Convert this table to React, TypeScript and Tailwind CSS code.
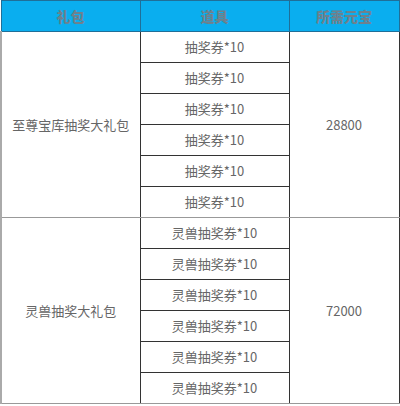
const groups = [
  { name: "至尊宝库抽奖大礼包", item: "抽奖券*10", price: "28800" },
  { name: "灵兽抽奖大礼包", item: "灵兽抽奖券*10", price: "72000" },
];

export default function App() {
  return (
    <div
      className="w-[400px] h-[406px] bg-white overflow-hidden"
      style={{ fontFamily: '"Noto Sans CJK SC", "Noto Sans", sans-serif' }}
    >
      <table className="w-[398px] border-collapse table-fixed text-[13px] text-[#666]">
        <colgroup>
          <col className="w-[139px]" />
          <col className="w-[149px]" />
          <col className="w-[110px]" />
        </colgroup>
        <thead>
          <tr className="h-[31px] bg-[#0aaeef] text-[#6e818d] text-[14px]">
            <th className="border border-[#1f6f99] font-black">礼包</th>
            <th className="border border-[#1f6f99] font-black">道具</th>
            <th className="border border-[#1f6f99] font-black">所需元宝</th>
          </tr>
        </thead>
        <tbody>
          {groups.map((g) =>
            Array.from({ length: 6 }).map((_, i) => (
              <tr key={g.name + i} className="h-[31px]">
                {i === 0 && (
                  <td
                    rowSpan={6}
                    className="text-center border-l-2 border-l-[#aaa] border-r border-r-[#333] border-b border-b-[#999]"
                  >
                    {g.name}
                  </td>
                )}
                <td
                  className={
                    "text-center border-r border-r-[#333] " +
                    (i === 5 ? "border-b border-b-[#999]" : "border-b border-b-[#333]")
                  }
                >
                  {g.item}
                </td>
                {i === 0 && (
                  <td
                    rowSpan={6}
                    className="text-center border-r border-r-[#333] border-b border-b-[#999]"
                  >
                    {g.price}
                  </td>
                )}
              </tr>
            ))
          )}
        </tbody>
      </table>
    </div>
  );
}
